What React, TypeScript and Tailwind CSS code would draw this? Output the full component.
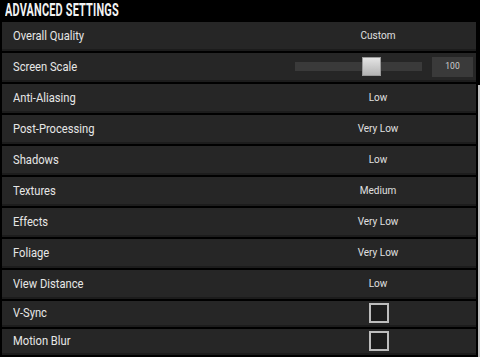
const rows: { label: string; value: string }[] = [
  { label: "Anti-Aliasing", value: "Low" },
  { label: "Post-Processing", value: "Very Low" },
  { label: "Shadows", value: "Low" },
  { label: "Textures", value: "Medium" },
  { label: "Effects", value: "Very Low" },
  { label: "Foliage", value: "Very Low" },
  { label: "View Distance", value: "Low" },
];

function Row({ label, children, tall = true }: { label: string; children: React.ReactNode; tall?: boolean }) {
  return (
    <div
      className={`flex items-center bg-[#262626] border-b-2 border-[#1c1c1c] ${tall ? "h-[29px]" : "h-[26px]"}`}
    >
      <div className="flex-1 flex items-center pl-[11px]">
        <span className="inline-block origin-left scale-x-[0.86] text-[13px] leading-[16px] text-[#e6e6e6] font-['Roboto',sans-serif]">
          {label}
        </span>
      </div>
      {children}
    </div>
  );
}

function Value({ text }: { text: string }) {
  return (
    <div className="w-[196px] text-center text-[10px] leading-[14px] text-[#e0e0e0] font-['Roboto',sans-serif]">{text}</div>
  );
}

function Checkbox() {
  return (
    <div className="w-[196px] flex justify-center">
      <div className="w-[20px] h-[20px] border-2 border-[#bdbdbd] bg-[#1c1c1c] ml-[1px]" />
    </div>
  );
}

export default function App() {
  return (
    <div className="w-[480px] h-[357px] bg-black overflow-hidden flex flex-col">
      <div className="h-[22px] pl-[5px] leading-[21px]">
        <span className="inline-block origin-left scale-x-[0.59] text-[18.5px] font-bold text-[#f2f2f2] tracking-[0.3px] font-['Roboto',sans-serif]">
          ADVANCED SETTINGS
        </span>
      </div>
      <div className="flex flex-1">
        <div className="flex-1 pl-[2px] pr-[2px] flex flex-col gap-[2px]">
          <Row label="Overall Quality">
            <Value text="Custom" />
          </Row>
          <Row label="Screen Scale">
            <div className="w-[196px] flex items-center pl-[15px] pr-[3px]">
              <div className="relative w-[127px] h-[9px] bg-[#3a3a3a]">
                <div className="absolute left-[67px] top-[-5px] w-[19px] h-[19px] bg-gradient-to-b from-[#e4e4e4] to-[#b4b4b4] border border-[#9a9a9a]" />
              </div>
              <div className="ml-[10px] w-[41px] h-[20px] bg-[#3a3a3a] flex items-center justify-center text-[8.5px] text-[#d0d0d0] font-['Roboto',sans-serif]">
                100
              </div>
            </div>
          </Row>
          {rows.map((r) => (
            <Row key={r.label} label={r.label}>
              <Value text={r.value} />
            </Row>
          ))}
          <Row label="V-Sync" tall={false}>
            <Checkbox />
          </Row>
          <Row label="Motion Blur" tall={false}>
            <Checkbox />
          </Row>
        </div>
        <div className="w-[2px] flex flex-col">
          <div className="h-[63px]" />
          <div className="flex-1 bg-[#c4c4c4]" />
        </div>
      </div>
    </div>
  );
}
